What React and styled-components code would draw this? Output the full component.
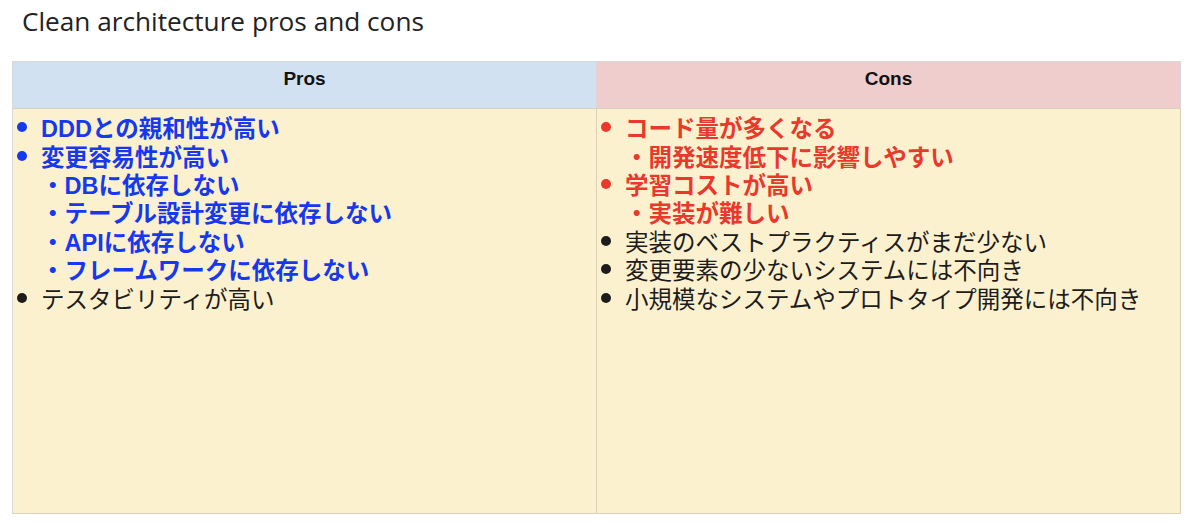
import React from "react";
import styled, { createGlobalStyle } from "styled-components";

const GlobalStyle = createGlobalStyle`
  html, body {
    margin: 0;
    padding: 0;
    background: #ffffff;
  }
`;

const Page = styled.div`
  width: 1200px;
  height: 524px;
  overflow: hidden;
  box-sizing: border-box;
  padding: 3px 0 0 12px;
  font-family: "Liberation Sans", "Noto Sans CJK JP", sans-serif;
`;

const Title = styled.h1`
  margin: 0 0 0 10px;
  font-family: "Open Sans", "Noto Sans CJK JP", sans-serif;
  font-weight: 400;
  font-size: 26.2px;
  line-height: 36px;
  color: #222222;
  height: 58px;
`;

const Table = styled.div`
  display: grid;
  grid-template-columns: 584px 584px;
  grid-template-rows: 47px 405px;
  border-top: 1px solid #d8d8d8;
  border-left: 1px solid #d8d8d8;
  width: 1168px;
`;

const Head = styled.div`
  background: ${(p) => p.$bg};
  border-right: 1px solid #d8d8d8;
  border-bottom: 1px solid #dccfc0;
  display: flex;
  justify-content: center;
  padding-top: 7px;
  box-sizing: border-box;
  font-weight: 700;
  font-size: 19px;
  line-height: 20px;
  color: #111111;
`;

const Body = styled.div`
  background: #fcf1cf;
  border-right: 1px solid #ddd0b8;
  border-bottom: 1px solid #ddd0b8;
  padding: 4px 0 0 3px;
  box-sizing: border-box;
`;

const Line = styled.div`
  display: flex;
  align-items: center;
  height: 28.4px;
  font-size: 23.5px;
  font-weight: ${(p) => (p.$bold ? 700 : 400)};
  color: ${(p) => p.$color};
  white-space: nowrap;
`;

const Marker = styled.span`
  flex: none;
  width: 25px;
  height: 28px;
  display: flex;
  align-items: center;

  &::before {
    content: "";
    flex: none;
    display: ${(p) => (p.$hidden ? "none" : "block")};
    width: 10px;
    height: 10px;
    margin-left: 0.5px;
    border-radius: 50%;
    background: currentColor;
  }
`;

const BLUE = "#1638ee";
const RED = "#e8392c";
const BLACK = "#1c1c1c";

const pros = [
  { t: "DDDとの親和性が高い", c: BLUE, b: true },
  { t: "変更容易性が高い", c: BLUE, b: true },
  { t: "・DBに依存しない", c: BLUE, b: true, s: true },
  { t: "・テーブル設計変更に依存しない", c: BLUE, b: true, s: true },
  { t: "・APIに依存しない", c: BLUE, b: true, s: true },
  { t: "・フレームワークに依存しない", c: BLUE, b: true, s: true },
  { t: "テスタビリティが高い", c: BLACK },
];

const cons = [
  { t: "コード量が多くなる", c: RED, b: true },
  { t: "・開発速度低下に影響しやすい", c: RED, b: true, s: true },
  { t: "学習コストが高い", c: RED, b: true },
  { t: "・実装が難しい", c: RED, b: true, s: true },
  { t: "実装のベストプラクティスがまだ少ない", c: BLACK },
  { t: "変更要素の少ないシステムには不向き", c: BLACK },
  { t: "小規模なシステムやプロトタイプ開発には不向き", c: BLACK },
];

const List = ({ items }) =>
  items.map((it, i) => (
    <Line key={i} $color={it.c} $bold={it.b}>
      <Marker $hidden={it.s} />
      {it.t}
    </Line>
  ));

export default function App() {
  return (
    <>
      <GlobalStyle />
      <Page>
        <Title>Clean architecture pros and cons</Title>
        <Table>
          <Head $bg="#d1e1f2">Pros</Head>
          <Head $bg="#eecdcc">Cons</Head>
          <Body>
            <List items={pros} />
          </Body>
          <Body>
            <List items={cons} />
          </Body>
        </Table>
      </Page>
    </>
  );
}
